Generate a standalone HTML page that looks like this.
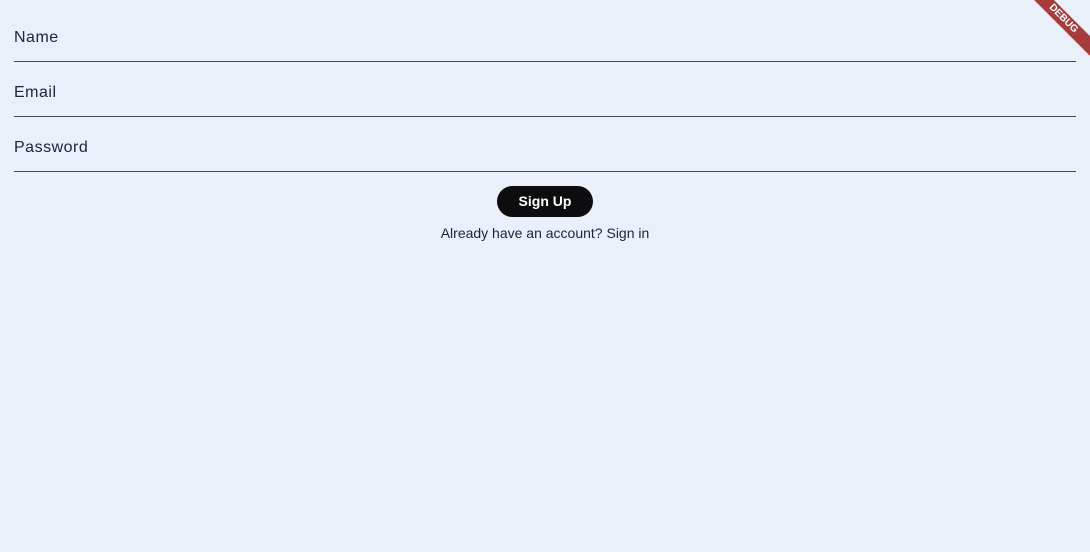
<!DOCTYPE html>
<html><head><meta charset="utf-8"><style>
html,body{margin:0;padding:0;width:1090px;height:552px;overflow:hidden;background:#e9f0fa;font-family:"Liberation Sans",sans-serif;}
.f{position:absolute;left:14px;width:1062px;border-bottom:1px solid #44475a;color:#22243a;font-size:16px;letter-spacing:0.5px;box-sizing:border-box;padding-top:1px;}
.btn{position:absolute;left:497px;top:186px;width:96px;height:31px;border-radius:16px;background:#0d0d0f;color:#fff;font-size:14px;font-weight:bold;text-align:center;line-height:31px;}
.t{position:absolute;left:0;width:1090px;top:225px;text-align:center;font-size:14px;color:#22243a;}
.rib{position:absolute;right:-28px;top:12px;width:110px;height:14px;background:#a83c3c;transform:rotate(45deg);color:#fff;font-size:10px;font-weight:bold;text-align:center;line-height:14px;}
</style></head><body>
<div class="f" style="top:28px;height:34px">Name</div>
<div class="f" style="top:83px;height:34px">Email</div>
<div class="f" style="top:138px;height:34px">Password</div>
<div class="btn">Sign Up</div>
<div class="t">Already have an account? Sign in</div>
<div class="rib">DEBUG</div>
</body></html>
